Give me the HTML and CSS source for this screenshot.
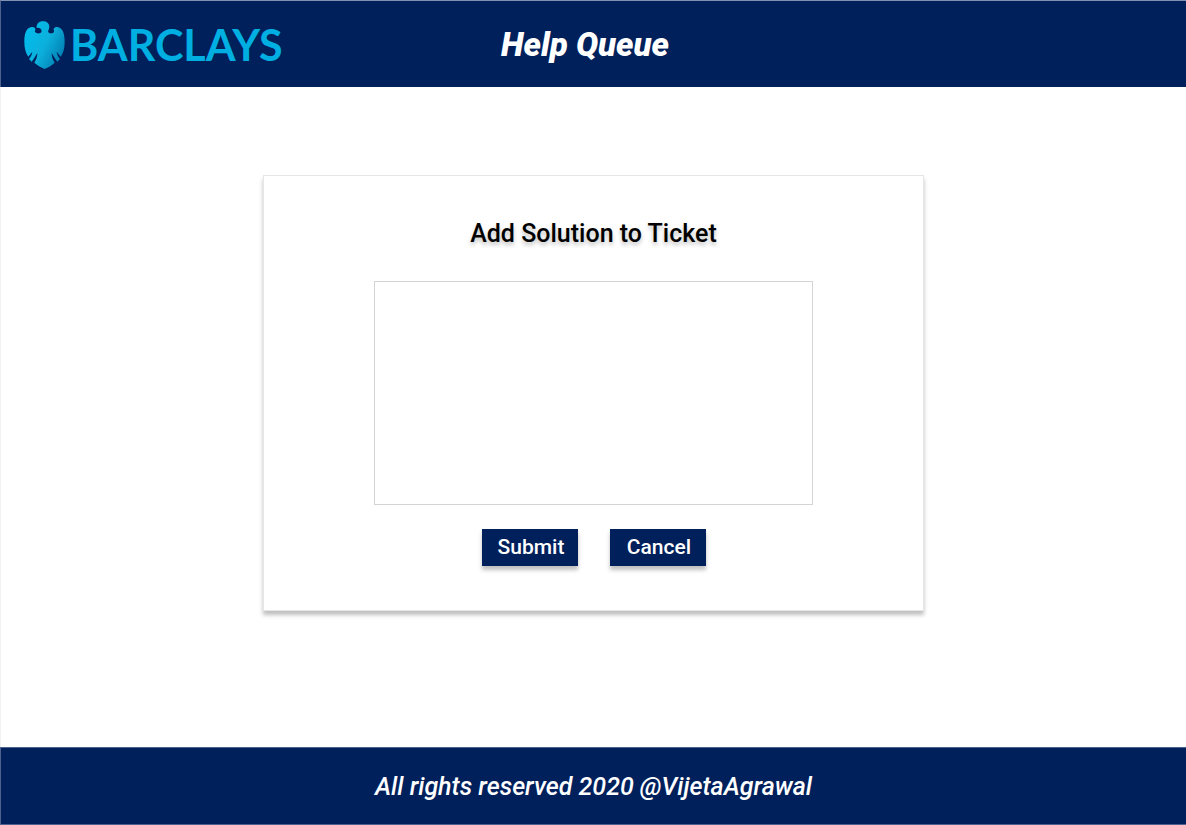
FILE: index.html
```html
<!DOCTYPE html>
<html lang="en">
<head>
<meta charset="utf-8">
<meta name="viewport" content="width=device-width, initial-scale=1">
<title>Help Queue</title>
<link rel="stylesheet" href="styles.css">
</head>
<body class="page">
<header class="header">
  <a class="brand" href="#">
    <svg class="brand-mark" viewBox="28 32 123 144" aria-hidden="true">
      <defs>
        <linearGradient id="eagle" x1="0" y1="0.2" x2="1" y2="0.8">
          <stop offset="0" stop-color="#00bdec"/>
          <stop offset="0.5" stop-color="#0cb0dc"/>
          <stop offset="1" stop-color="#0079ad"/>
        </linearGradient>
      </defs>
      <path fill="url(#eagle)" d="M66 53C65 40 73 33 84 33C96 33 104 39 104 49C104 56 99 61 101 66C105 71 116 70 118 64C119 60 116 59 117 55C120 50 128 49 135 52C146 58 150 74 150 94C150 114 146 127 138 139C134 134 130 128 126 124C127 132 131 140 136 146L128 154C121 146 116 136 111 128C111 138 114 148 120 157C110 166 101 171 90 176C79 171 70 166 59 157C65 148 68 138 68 128C63 136 58 146 51 154L43 146C48 140 52 132 53 124C49 128 45 134 41 139C33 127 29 114 29 94C29 74 33 57 44 52C51 49 60 50 62 55C63 59 60 60 61 64C64 70 76 71 80 66C82 60 79 56 76 54C72 52 69 52 66 53Z"/>
    </svg>
    <span class="brand-name">BARCLAYS</span>
  </a>
  <h1 class="title">Help Queue</h1>
</header>
<main class="main">
  <form class="card">
    <label class="card-title" for="solution">Add Solution to Ticket</label>
    <textarea class="solution" id="solution" name="solution"></textarea>
    <div class="actions">
      <button class="button" type="submit">Submit</button>
      <button class="button" type="button">Cancel</button>
    </div>
  </form>
</main>
<footer class="footer">All rights reserved 2020 @VijetaAgrawal</footer>
</body>
</html>
```

FILE: styles.css
```css
* {
  box-sizing: border-box;
}

.page {
  display: flex;
  flex-direction: column;
  min-height: 100vh;
  margin: 0;
  background: #fff;
  font-family: Roboto, "Liberation Sans", sans-serif;
}

.header {
  display: grid;
  grid-template-columns: 1fr auto 1fr;
  align-items: center;
  padding: 20px 23px 18px;
  border-top: 1px solid #8090b0;
  border-left: 1px solid #4d628d;
  background: #00205c;
}

.brand {
  display: flex;
  align-items: center;
  gap: 5px;
  color: #00afe1;
  text-decoration: none;
}

.brand-mark {
  width: 41px;
  height: 48px;
}

.brand-name {
  font: 700 43px/48px Lato, sans-serif;
}

.title {
  margin: 0;
  padding-right: 17px;
  color: #fff;
  font-size: 33px;
  font-style: italic;
  font-weight: 900;
  line-height: 48px;
}

.main {
  display: flex;
  flex: 1;
  flex-direction: column;
  align-items: center;
  padding: 88px 24px;
  border-left: 1px solid #f2f2f2;
}

.card {
  display: flex;
  flex-direction: column;
  align-items: center;
  width: 100%;
  max-width: 661px;
  padding: 42px 24px 44px;
  border: 1px solid #e6e6e6;
  background: #fff;
  box-shadow: 0 4px 4px rgba(0, 0, 0, 0.25);
}

.card-title {
  color: #000;
  font-size: 25px;
  font-weight: 500;
  line-height: 32px;
  text-shadow: 0 3px 4px rgba(0, 0, 0, 0.25);
}

.solution {
  width: 100%;
  max-width: 439px;
  height: 224px;
  margin: 31px 0 24px;
  padding: 12px;
  border: 1px solid #d4d4d4;
  border-radius: 0;
  font: 400 16px/24px Roboto, sans-serif;
  resize: none;
}

.actions {
  display: flex;
  gap: 32px;
}

.button {
  width: 96px;
  height: 37px;
  padding: 0 0 1px 3px;
  border: 0;
  background: #00205c;
  box-shadow: 0 4px 4px rgba(0, 0, 0, 0.25);
  color: #fff;
  font: 500 21px/36px Roboto, sans-serif;
}

.footer {
  padding: 23px 24px 22px;
  border: solid #4d628d;
  border-width: 1px 0 1px 1px;
  background: #00205c;
  color: #fff;
  font-size: 25px;
  font-style: italic;
  font-weight: 500;
  line-height: 31px;
  text-align: center;
}
```
